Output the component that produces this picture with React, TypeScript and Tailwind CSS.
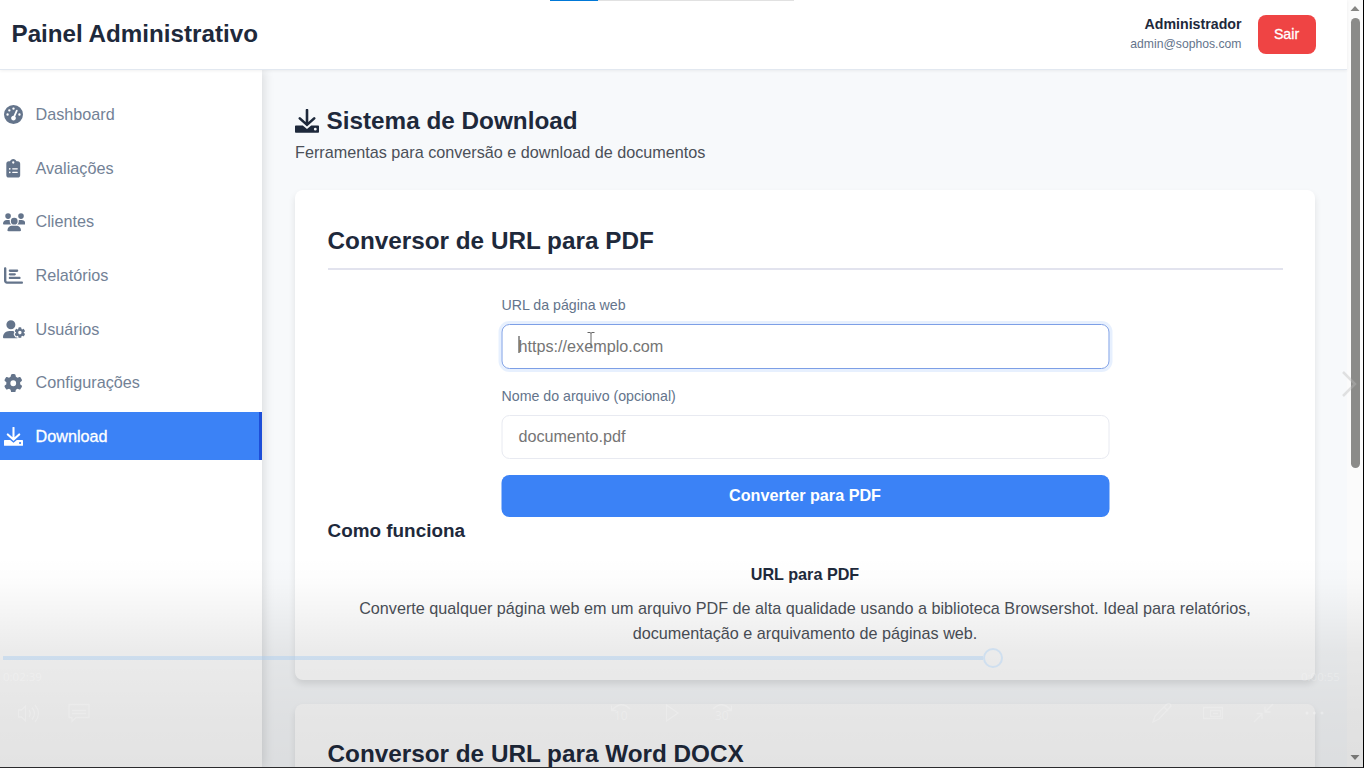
import type { ReactNode } from "react";
import {
  FaGaugeHigh,
  FaClipboardList,
  FaUsers,
  FaChartBar,
  FaUserGear,
  FaGear,
} from "react-icons/fa6";

function DownloadIcon({ size }: { size: number }) {
  return (
    <svg width={size} height={size} viewBox="0 0 24 24" fill="currentColor">
      <path d="M10.700 1a1.300 1.300 0 0 1 2.600 0v12l5-4.600a1.300 1.300 0 0 1 1.800 1.900L12 17.600 3.900 10.300a1.300 1.300 0 0 1 1.800-1.900l5 4.600z" />
      <path
        fillRule="evenodd"
        d="M.8 16.500h7L12 20l4.200-3.500h7c.5 0 .8.300.8.800v5.600c0 .5-.3.800-.8.800H.8c-.5 0-.8-.3-.8-.8v-5.600c0-.5.300-.8.800-.8zM20.300 18.800a1.400 1.400 0 1 0 0 2.800 1.400 1.400 0 0 0 0-2.800z"
      />
    </svg>
  );
}

const navItems: { label: string; icon: ReactNode; active?: boolean }[] = [
  { label: "Dashboard", icon: <FaGaugeHigh size={19} /> },
  { label: "Avaliações", icon: <FaClipboardList size={18.5} /> },
  { label: "Clientes", icon: <FaUsers size={22.5} className="relative left-[1px]" /> },
  { label: "Relatórios", icon: <FaChartBar size={19} /> },
  { label: "Usuários", icon: <FaUserGear size={22.5} className="relative left-[1px]" /> },
  { label: "Configurações", icon: <FaGear size={18.5} /> },
  { label: "Download", icon: <DownloadIcon size={19} />, active: true },
];

function Header() {
  return (
    <header className="relative z-20 flex h-[70px] shrink-0 items-center justify-between border-b border-[#e2e8f0] bg-white pr-[31.5px] pl-[11.5px] shadow-[0_1px_3px_rgba(0,0,0,0.06)]">
      <h1 className="pb-[2px] text-[24.2px] leading-8 font-bold text-[#1e293b]">Painel Administrativo</h1>
      <div className="flex items-center gap-4">
        <div className="pb-[1px] text-right">
          <div className="text-[14.2px] leading-[19px] font-bold text-[#1e293b]">Administrador</div>
          <div className="pt-[1px] text-[12.2px] leading-[19px] text-[#64748b]">admin@sophos.com</div>
        </div>
        <button className="h-[39px] w-[58px] rounded-[8px] bg-[#ef4444] text-[14.2px] font-medium text-white [-webkit-text-stroke:0.3px_white]">
          Sair
        </button>
      </div>
    </header>
  );
}

function Sidebar() {
  return (
    <nav className="relative z-10 flex w-[261.5px] shrink-0 flex-col gap-[5px] bg-white pt-5 shadow-[2px_0_10px_rgba(0,0,0,0.12)]">
      {navItems.map((item) => (
        <a
          key={item.label}
          className={
            item.active
              ? "flex h-[48.65px] items-center border-r-[3px] border-[#1d4ed8] bg-[#3b82f6] text-white [-webkit-text-stroke:0.3px_white]"
              : "flex h-[48.65px] items-center text-[#64748b]"
          }
        >
          <span className="ml-[3px] flex w-[20px] shrink-0 justify-center pt-[1px] [&>svg]:shrink-0">{item.icon}</span>
          <span
            className={
              item.active
                ? "ml-[12.5px] text-[16.2px] leading-6"
                : "ml-[12.5px] pb-[0.6px] text-[16.2px] leading-6 opacity-90"
            }
          >
            {item.label}
          </span>
        </a>
      ))}
    </nav>
  );
}

function PdfCard() {
  return (
    <section className="flex h-[490px] shrink-0 flex-col rounded-[8px] bg-white px-[32.5px] pt-[33px] shadow-[0_4px_7px_rgba(0,0,0,0.1)]">
      <h2 className="h-[47px] shrink-0 border-b-2 border-[#e2e3ee] text-[24.3px] leading-[36px] font-bold text-[#1e293b]">
        Conversor de URL para PDF
      </h2>
      <form className="mx-auto flex w-[608px] translate-x-[0.5px] flex-col pt-[24px]">
        <label className="text-[14.2px] leading-[22px] text-[#64748b]">URL da página web</label>
        <div className="mt-[8px] flex h-[45px] items-center rounded-[8px] border border-[#7d9fe6] pl-4 text-[16.2px] text-[#757575] shadow-[0_0_0_3px_rgba(59,130,246,0.12)]">
          <span className="relative">
            https://exemplo.com
            <span className="absolute top-[2px] left-0 h-[17px] w-px bg-[#333]" />
            <svg className="absolute -top-[3px] left-[68px]" width="9" height="18" viewBox="0 0 9 18" fill="none" stroke="#666">
              <path d="M1 1.500h2.500l1 .7 1-.7H8M4.500 2v14" />
            </svg>
          </span>
        </div>
        <label className="mt-[16px] text-[14.2px] leading-[22px] text-[#64748b]">Nome do arquivo (opcional)</label>
        <div className="mt-[8px] flex h-[44px] items-center rounded-[8px] border border-[#e8eaf1] pb-[1px] pl-4 text-[16.2px] text-[#757575]">
          documento.pdf
        </div>
        <button type="button" className="mt-4 h-[42px] rounded-[8px] bg-[#3b82f6] pr-px pb-[2px] text-[16.2px] font-bold text-white">
          Converter para PDF
        </button>
      </form>
      <h3 className="text-[18.9px] leading-[28px] font-bold text-[#1e293b]">Como funciona</h3>
      <h4 className="mt-[17px] text-center text-[16.2px] leading-[24px] font-bold text-[#1e293b]">URL para PDF</h4>
      <p className="mt-[10px] text-center text-[16.22px] leading-[25px] text-[#4b5058]">
        Converte qualquer página web em um arquivo PDF de alta qualidade usando a biblioteca Browsershot. Ideal para relatórios,
        <br />
        documentação e arquivamento de páginas web.
      </p>
    </section>
  );
}

function DocxCard() {
  return (
    <section className="mt-[24px] h-[200px] shrink-0 rounded-[8px] bg-white px-[32.5px] pt-[32px] shadow-[0_4px_7px_rgba(0,0,0,0.1)]">
      <h2 className="text-[24.3px] leading-[35px] font-bold text-[#1e293b]">Conversor de URL para Word DOCX</h2>
    </section>
  );
}

function Scrollbar() {
  return (
    <div className="flex w-[16px] shrink-0 flex-col items-center bg-[#fbfbfb]">
      <svg className="mt-[5px] shrink-0" width="10" height="7" viewBox="0 0 10 7" fill="#858583">
        <path d="M5 1l4.500 5h-9z" />
      </svg>
      <div className="mt-[6px] h-[450px] w-[9px] shrink-0 rounded-full bg-[#8b8b89]" />
      <svg className="mt-auto mb-[6px] shrink-0" width="10" height="7" viewBox="0 0 10 7" fill="#858583">
        <path d="M5 6L.5 1h9z" />
      </svg>
    </div>
  );
}

function PlayerOverlay() {
  return (
    <div className="pointer-events-none absolute inset-0 z-30">
      <div className="absolute top-0 left-[550px] flex h-px w-[244px] bg-[#e1e1e1]">
        <div className="w-[48px] bg-[#0078d7]" />
      </div>
      <div className="absolute inset-x-0 bottom-0 h-[210px] bg-[linear-gradient(to_bottom,rgba(0,0,0,0)_0%,rgba(0,0,0,0.012)_12%,rgba(0,0,0,0.078)_45%,rgba(0,0,0,0.102)_78%,rgba(0,0,0,0.11)_100%)]" />
      <div className="absolute inset-x-0 bottom-0 h-[119px]">
        <div className="absolute top-[8px] left-[3px] h-[4px] w-[980px] bg-[#a9cdf0]/45" />
        <div className="absolute top-0 left-[983px] size-[20px] rounded-full border-2 border-[#cfdfef]" />
        <span className="absolute top-[19px] left-[3px] font-['Open_Sans'] text-[11.5px] leading-[20px] text-white/25">0:02:39</span>
        <span className="absolute top-[19px] left-[1301px] font-['Open_Sans'] text-[11.5px] leading-[20px] text-white/25">0:00:55</span>
        <svg className="absolute top-[52px] left-0" width="1364" height="28" viewBox="0 0 1364 28" fill="none" stroke="white" strokeOpacity="0.22" strokeWidth="1.300">
          <path d="M18.500 10v7h3l4 4V6l-4 4zM29 10q2.500 3.500 0 7M32 7.500q5 6 0 12M35 5q7 8.500 0 17" />
          <path d="M69 4.500h20v13H76l-4 4v-4h-3zM72 10.500h14M72 13.500h14" />
          <path d="M611.500 5.500v5h5M612 10q9-10 18-1" />
          <path d="M666.500 5v16l11.500-8z" />
          <path d="M731.500 5.500v5h-5M731 10q-9-10-18-1" />
          <path d="M1153 22l2-6 12-12q3-2 4 2l-12 13zM1164 7l4 4" />
          <path d="M1203.500 7.500h19v11h-19zM1210.500 10.500h10v6h-10zM1213 13.500h5" />
          <path d="M1254 22l8-8M1256.500 13.500h5.500v5.500M1273 4l-8 8M1265 6.500V12h5.500" />
          <g fill="white" fillOpacity="0.3" stroke="none">
            <circle cx="1307" cy="13" r="1.500" />
            <circle cx="1314.500" cy="13" r="1.500" />
            <circle cx="1322" cy="13" r="1.500" />
          </g>
        </svg>
        <span className="absolute top-[60px] left-[614px] font-['Open_Sans'] text-[12px] leading-[16px] text-white/25">10</span>
        <span className="absolute top-[60px] left-[715px] font-['Open_Sans'] text-[12px] leading-[16px] text-white/25">30</span>
      </div>
      <svg className="absolute top-[370px] left-[1341px]" width="17" height="28" viewBox="0 0 17 28" fill="none" stroke="#bcbcbc" strokeOpacity="0.4" strokeWidth="2.500">
        <path d="M2 2l12 12L2 26" />
      </svg>
    </div>
  );
}

export default function App() {
  return (
    <div className="h-[768px] w-[1366px] overflow-hidden bg-white font-['Liberation_Sans',Arial,sans-serif]">
      <div className="relative flex h-[768px] w-[1364px] overflow-hidden border-r border-b border-r-black border-b-[#2b2b2d]">
        <div className="flex min-w-0 flex-1 flex-col">
          <Header />
          <div className="flex min-h-0 flex-1">
            <Sidebar />
            <main className="flex min-w-0 flex-1 flex-col overflow-hidden bg-[#f7f9fb] pr-8 pl-[33.5px]">
              <h2 className="mt-[34px] flex h-[34px] shrink-0 items-center text-[24.3px] leading-[34px] font-bold text-[#1e293b]">
                <DownloadIcon size={24} />
                <span className="ml-[7.5px]">Sistema de Download</span>
              </h2>
              <p className="mb-[24px] text-[16.2px] leading-[28px] text-[#4b5058]">
                Ferramentas para conversão e download de documentos
              </p>
              <PdfCard />
              <DocxCard />
            </main>
          </div>
        </div>
        <Scrollbar />
        <PlayerOverlay />
      </div>
    </div>
  );
}
